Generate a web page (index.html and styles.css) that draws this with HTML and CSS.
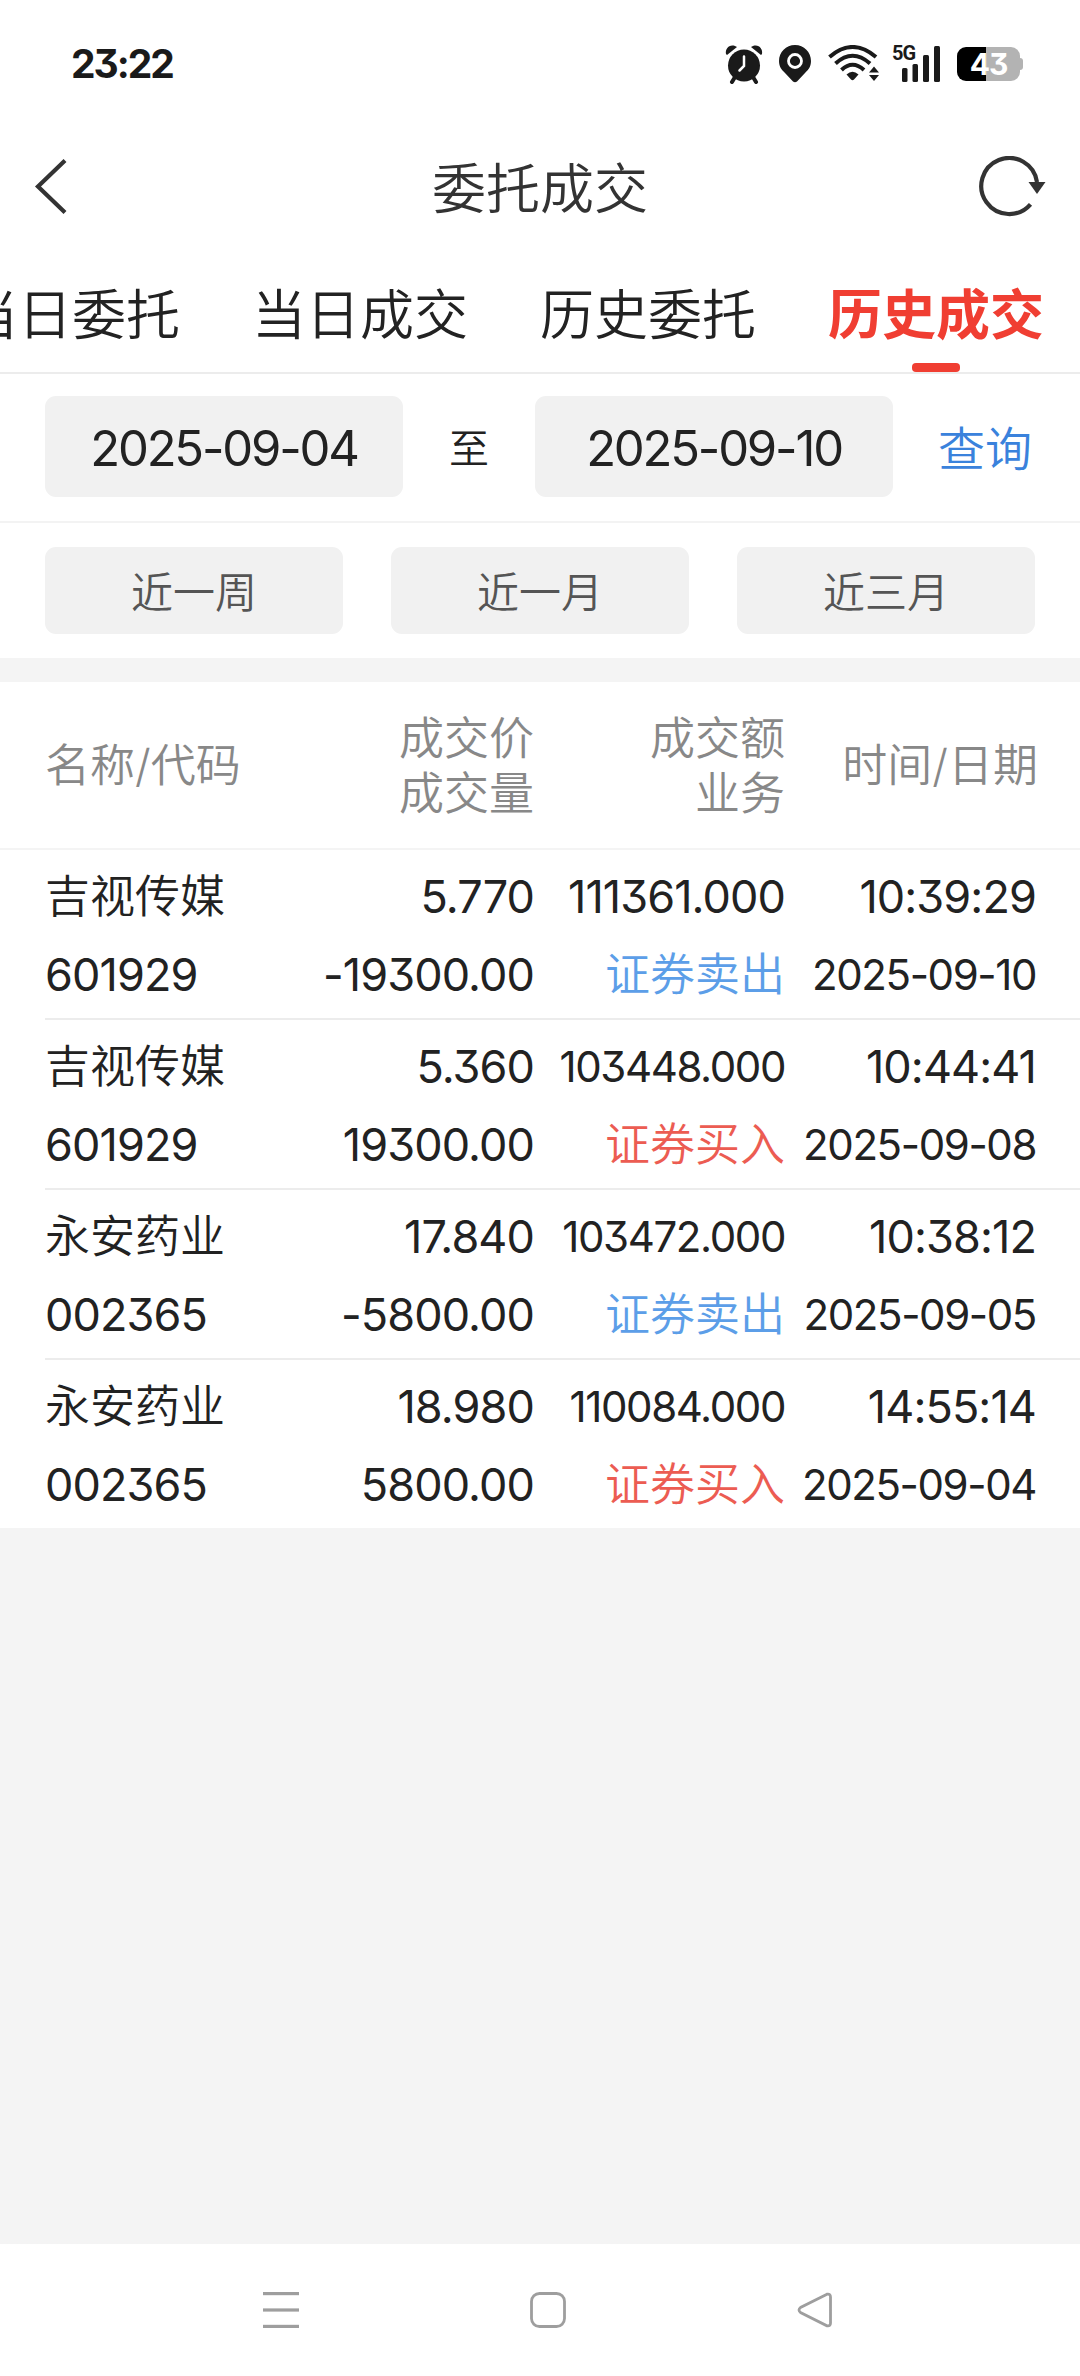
FILE: index.html
```html
<!DOCTYPE html>
<html lang="zh-CN">
<head>
  <meta charset="UTF-8" />
  <meta name="viewport" content="width=device-width, initial-scale=1" />
  <title>委托成交</title>
  <link rel="stylesheet" href="styles.css">
</head>
<body>

  <!-- 状态栏 -->
  <div class="status-bar">
    <span class="clock">23:22</span>
    <div class="status-icons">
      <svg class="icon-alarm" width="38" height="40" viewBox="0 0 38 40">
        <circle cx="19" cy="21.500" r="16" fill="#1a1a1a"/>
        <path d="M10 33L7 38M28 33L31 38" stroke="#1a1a1a" stroke-width="4" stroke-linecap="round"/>
        <path d="M1 10C0 5 4 0 10 2L12 3L2 11ZM37 10C38 5 34 0 28 2L26 3L36 11Z" fill="#1a1a1a"/>
        <path d="M19 12.500V22L14.500 26.500" fill="none" stroke="#fff" stroke-width="2.500" stroke-linecap="round"/>
      </svg>
      <svg class="icon-pin" width="32" height="38" viewBox="0 0 32 38">
        <path d="M16 0C7 0 0 7 0 16C0 22 3 25 6 28L14 36.500Q16 38 18 36.500L26 28C29 25 32 22 32 16C32 7 25 0 16 0Z" fill="#1a1a1a"/>
        <circle cx="16" cy="16" r="6.500" fill="none" stroke="#fff" stroke-width="2.800"/>
      </svg>
      <svg class="icon-wifi" width="52" height="38" viewBox="0 0 52 38">
        <g fill="none" stroke="#1a1a1a" stroke-width="4">
          <path d="M1.500 12Q24.500 -8 48 12"/>
          <path d="M7.500 18.500Q24.500 3 42 18.500"/>
          <path d="M13.500 25Q24.500 14.500 36 25"/>
        </g>
        <path d="M18.500 29.500Q24.500 24 30.500 29.500L26 34.500Q24.500 36 23 34.500Z" fill="#1a1a1a"/>
        <path d="M41 27.500L46 21.500L51 27.500ZM41 30L46 36L51 30Z" fill="#1a1a1a"/>
      </svg>
      <div class="signal">
        <span class="net">5G</span>
        <svg width="50" height="38" viewBox="0 0 50 38" fill="#1a1a1a">
          <rect x="10" y="23" width="5.500" height="14" rx="1.500"/>
          <rect x="20.500" y="19" width="5.500" height="18" rx="1.500"/>
          <rect x="31" y="10" width="6" height="27" rx="1.500"/>
          <rect x="42" y="1" width="6" height="36" rx="1.500"/>
        </svg>
      </div>
      <div class="battery"><span>43</span></div>
    </div>
  </div>

  <!-- 标题栏 -->
  <header class="header">
    <svg width="36" height="60" viewBox="0 0 36 60">
      <path d="M31 2.500L4 28.500L31 54.500" fill="none" stroke="#333" stroke-width="4.200"/>
    </svg>
    <h1>委托成交</h1>
    <svg width="70" height="64" viewBox="0 0 70 64">
      <path d="M54.500 48.300A28 28 0 1 1 61 26" fill="none" stroke="#333" stroke-width="4.200"/>
      <path d="M52.500 26H69.500L61 38Z" fill="#333"/>
    </svg>
  </header>

  <nav class="tabs">
    <a class="tab">当日委托</a>
    <a class="tab">当日成交</a>
    <a class="tab">历史委托</a>
    <a class="tab active">历史成交</a>
  </nav>

  <!-- 日期查询 -->
  <section class="date-row">
    <div class="date-box">2025-09-04</div>
    <span class="to">至</span>
    <div class="date-box">2025-09-10</div>
    <a class="query">查询</a>
  </section>

  <section class="range-row">
    <button>近一周</button>
    <button>近一月</button>
    <button>近三月</button>
  </section>

  <!-- 成交列表 -->
  <main class="list">
    <div class="list-head">
      <div>名称/代码</div>
      <div>成交价<br>成交量</div>
      <div>成交额<br>业务</div>
      <div>时间/日期</div>
    </div>

    <div class="trade">
      <span class="name">吉视传媒</span><span>5.770</span><span>111361.000</span><span>10:39:29</span>
      <span>601929</span><span>-19300.00</span><span class="sell">证券卖出</span><span class="small">2025-09-10</span>
    </div>
    <div class="trade">
      <span class="name">吉视传媒</span><span>5.360</span><span class="small">103448.000</span><span>10:44:41</span>
      <span>601929</span><span>19300.00</span><span class="buy">证券买入</span><span class="small">2025-09-08</span>
    </div>
    <div class="trade">
      <span class="name">永安药业</span><span>17.840</span><span class="small">103472.000</span><span>10:38:12</span>
      <span>002365</span><span>-5800.00</span><span class="sell">证券卖出</span><span class="small">2025-09-05</span>
    </div>
    <div class="trade">
      <span class="name">永安药业</span><span>18.980</span><span class="small">110084.000</span><span>14:55:14</span>
      <span>002365</span><span>5800.00</span><span class="buy">证券买入</span><span class="small">2025-09-04</span>
    </div>
  </main>

  <!-- 系统导航 -->
  <footer class="sys-nav">
    <svg width="36" height="36" viewBox="0 0 36 36" fill="#9e9e9e">
      <rect y="0" width="36" height="3.200"/>
      <rect y="16.400" width="36" height="3.200"/>
      <rect y="32.800" width="36" height="3.200"/>
    </svg>
    <svg width="36" height="36" viewBox="0 0 36 36">
      <rect x="1.500" y="1.500" width="33" height="33" rx="8" fill="none" stroke="#9e9e9e" stroke-width="2.800"/>
    </svg>
    <svg width="36" height="36" viewBox="0 0 36 36">
      <path d="M30 2.200L3.500 15.500Q0.500 18 3.500 20.500L30 33.800Q33.500 34.500 33.500 31V5Q33.500 1.500 30 2.200Z" fill="none" stroke="#9e9e9e" stroke-width="2.800"/>
    </svg>
  </footer>

</body>
</html>
```
FILE: styles.css
```css
* {
  box-sizing: border-box;
}

body {
  margin: 0;
  width: 1080px;
  height: 2376px;
  display: flex;
  flex-direction: column;
  overflow: hidden;
  background: #f4f4f4;
  color: #222;
  font-family: Inter, "Noto Sans CJK SC", sans-serif;
  font-weight: 350;
  font-feature-settings: "cv09";
}

svg {
  display: block;
  flex: none;
}

/* 状态栏 */
.status-bar {
  height: 128px;
  padding: 0 60px 0 71px;
  display: flex;
  justify-content: space-between;
  align-items: center;
  background: #fff;
}

.clock {
  font-size: 39px;
  line-height: 40px;
  font-weight: 650;
  letter-spacing: -2px;
  color: #1a1a1a;
}

.status-icons {
  display: flex;
  align-items: center;
}

.icon-pin {
  margin-left: 16px;
}

.icon-wifi {
  margin-left: 17px;
}

.signal {
  position: relative;
  margin-left: 12px;
}

.net {
  position: absolute;
  left: 0;
  top: -2px;
  font-family: Roboto, sans-serif;
  font-size: 20px;
  line-height: 20px;
  font-weight: 700;
  letter-spacing: -1px;
  color: #1a1a1a;
}

.battery {
  position: relative;
  width: 63px;
  height: 34px;
  margin-left: 15px;
  border-radius: 9px;
  background: linear-gradient(to right, #000 29px, #b3b3b3 29px);
  color: #fff;
  font-size: 30px;
  line-height: 35px;
  font-weight: 700;
  letter-spacing: -1px;
  text-align: center;
}

.battery::after {
  content: "";
  position: absolute;
  right: -3px;
  top: 11px;
  width: 4px;
  height: 12px;
  border-radius: 0 3px 3px 0;
  background: #b3b3b3;
}

/* 标题栏 */
.header {
  height: 120px;
  padding: 0 34px;
  display: flex;
  justify-content: space-between;
  align-items: center;
  background: #fff;
  color: #333;
}

.header h1 {
  margin: 3px 0 0 34px;
  font-size: 54px;
  line-height: 60px;
  font-weight: 350;
}

.tabs {
  height: 126px;
  padding-right: 36px;
  display: flex;
  justify-content: flex-end;
  gap: 72px;
  background: #fff;
  border-bottom: 2px solid #ececec;
}

.tab {
  position: relative;
  flex: none;
  font-size: 54px;
  line-height: 135px;
}

.tab.active {
  color: #f03e32;
  font-weight: 700;
}

.tab.active::after {
  content: "";
  position: absolute;
  left: 84px;
  bottom: 0;
  width: 48px;
  height: 9px;
  border-radius: 4px;
  background: #f03e32;
}

/* 日期查询 */
.date-row {
  height: 149px;
  padding: 22px 45px 24px;
  display: flex;
  background: #fff;
  border-bottom: 2px solid #f3f3f3;
  line-height: 105px;
}

.date-box {
  width: 358px;
  height: 101px;
  border-radius: 11px;
  background: #f1f1f1;
  font-size: 49px;
  font-weight: 400;
  line-height: 105px;
  letter-spacing: -2.2px;
  text-align: center;
}

.to {
  width: 132px;
  text-align: center;
  font-size: 40px;
}

.query {
  margin-left: 45px;
  font-size: 47px;
  color: #3a82dc;
  white-space: nowrap;
}

.range-row {
  height: 135px;
  padding: 24px 45px;
  display: flex;
  gap: 48px;
  background: #fff;
}

.range-row button {
  flex: 1;
  padding: 4px 0 0;
  border: none;
  border-radius: 11px;
  background: #f1f1f1;
  color: #555;
  font-family: inherit;
  font-size: 42px;
  font-weight: 350;
  line-height: 83px;
}

/* 成交列表 */
.list {
  margin-top: 24px;
  background: #fff;
}

.list-head,
.trade {
  display: grid;
  grid-template-columns: 238px 251px 251px 251px;
  font-size: 45px;
}

.list-head {
  grid-template-columns: 238px 251px 251px 253px;
  height: 168px;
  padding: 1px 0 0 45px;
  align-items: center;
  border-bottom: 2px solid #f4f4f4;
  color: #888;
  line-height: 55px;
  text-align: right;
}

.list-head div:first-child {
  text-align: left;
}

.trade {
  height: 170px;
  margin-left: 45px;
  padding: 8px 0 6px;
  grid-auto-rows: 78px;
  border-bottom: 2px solid #ececec;
  font-weight: 400;
  line-height: 78px;
  letter-spacing: -0.9px;
}

.trade:last-child {
  height: 168px;
  border-bottom: none;
}

.trade span {
  display: flex;
  justify-content: flex-end;
  white-space: nowrap;
}

.trade span:nth-child(4n + 1) {
  justify-content: flex-start;
}

.trade .small {
  font-size: 42px;
  letter-spacing: -1.4px;
}

.trade .name,
.trade .sell,
.trade .buy {
  font-weight: 350;
  letter-spacing: 0;
}

.trade .sell {
  color: #5c9ee8;
}

.trade .buy {
  color: #ec5c52;
}

/* 系统导航 */
.sys-nav {
  height: 132px;
  margin-top: auto;
  padding: 0 247px 0 263px;
  display: flex;
  justify-content: space-between;
  align-items: center;
  background: #fff;
}
```
